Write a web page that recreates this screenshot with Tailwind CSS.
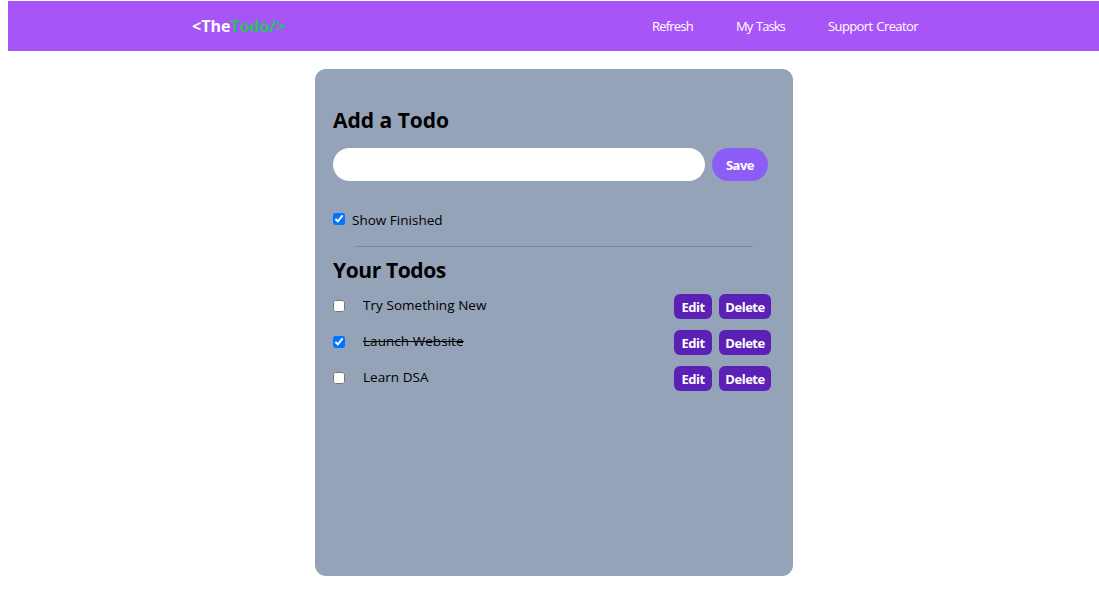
<!DOCTYPE html>
<html lang="en">
<head>
<meta charset="utf-8">
<title>TheTodo</title>
<script src="https://cdn.jsdelivr.net/npm/@tailwindcss/browser@4"></script>
</head>
<body class="h-[601px] overflow-hidden bg-white pt-px pl-2 font-['Segoe_UI','Open_Sans',sans-serif] text-black">
<nav class="flex h-[50px] items-center bg-[#a855f7] pr-[181px] pl-[184px] text-white whitespace-nowrap">
  <div class="text-[16px] font-bold"><span>&lt;The</span><span class="text-[#22c55e]">Todo/&gt;</span></div>
  <ul class="ml-auto flex gap-[43px] pt-0.5 text-[13px]">
    <li class="w-[41px] tracking-[-0.8px]">Refresh</li><li class="w-[49px] tracking-[-1px] [word-spacing:1.5px]">My Tasks</li><li class="w-[90px] tracking-[-0.6px] [word-spacing:1px]">Support Creator</li>
  </ul>
</nav>
<main class="mt-[18px] ml-[307px] flex h-[507px] w-[478px] flex-col rounded-[11px] bg-[#94a3b8] pt-[35px] pr-[22px] pl-[18px]">
  <h2 class="h-8 pt-px text-[21px] leading-[31px] font-bold whitespace-nowrap">Add a Todo</h2>
  <div class="mt-3 flex gap-[7px]">
    <input type="text" class="h-[33px] w-[372px] rounded-full bg-white px-4 text-sm outline-none">
    <button class="h-[33px] w-14 rounded-full bg-[#8b5cf6] pt-0.5 text-[13px] font-bold tracking-[-0.5px] text-white">Save</button>
  </div>
  <label class="mt-7 flex h-5 items-center gap-[7px] text-[13.5px] leading-5 tracking-[0.02px] whitespace-nowrap">
    <input type="checkbox" checked class="size-3"><span class="pt-0.5">Show Finished</span>
  </label>
  <hr class="mt-[17px] ml-[22px] w-[398px] border-t border-[#7a8796]">
  <h2 class="mt-[7px] h-8 pt-px text-[21px] leading-[31px] font-bold tracking-[-0.4px] whitespace-nowrap">Your Todos</h2>
  <ul class="mt-2 flex flex-col gap-[11px] text-[13.5px] leading-5 tracking-[0.05px] whitespace-nowrap">
    <li class="flex h-[25px] items-center">
      <input type="checkbox" class="mb-px size-3"><span class="ml-[18px] pb-[3px]">Try Something New</span>
      <div class="ml-auto flex gap-[7px] text-[13px] font-bold tracking-[-0.5px] text-white"><button class="h-[25px] w-[38px] rounded-md bg-[#5b21b6]">Edit</button><button class="h-[25px] w-[52px] rounded-md bg-[#5b21b6]">Delete</button></div>
    </li>
    <li class="flex h-[25px] items-center">
      <input type="checkbox" checked class="mb-px size-3"><span class="ml-[18px] pb-[3px] line-through">Launch Website</span>
      <div class="ml-auto flex gap-[7px] text-[13px] font-bold tracking-[-0.5px] text-white"><button class="h-[25px] w-[38px] rounded-md bg-[#5b21b6]">Edit</button><button class="h-[25px] w-[52px] rounded-md bg-[#5b21b6]">Delete</button></div>
    </li>
    <li class="flex h-[25px] items-center">
      <input type="checkbox" class="mb-px size-3"><span class="ml-[18px] pb-[3px]">Learn DSA</span>
      <div class="ml-auto flex gap-[7px] text-[13px] font-bold tracking-[-0.5px] text-white"><button class="h-[25px] w-[38px] rounded-md bg-[#5b21b6]">Edit</button><button class="h-[25px] w-[52px] rounded-md bg-[#5b21b6]">Delete</button></div>
    </li>
  </ul>
</main>
</body>
</html>
